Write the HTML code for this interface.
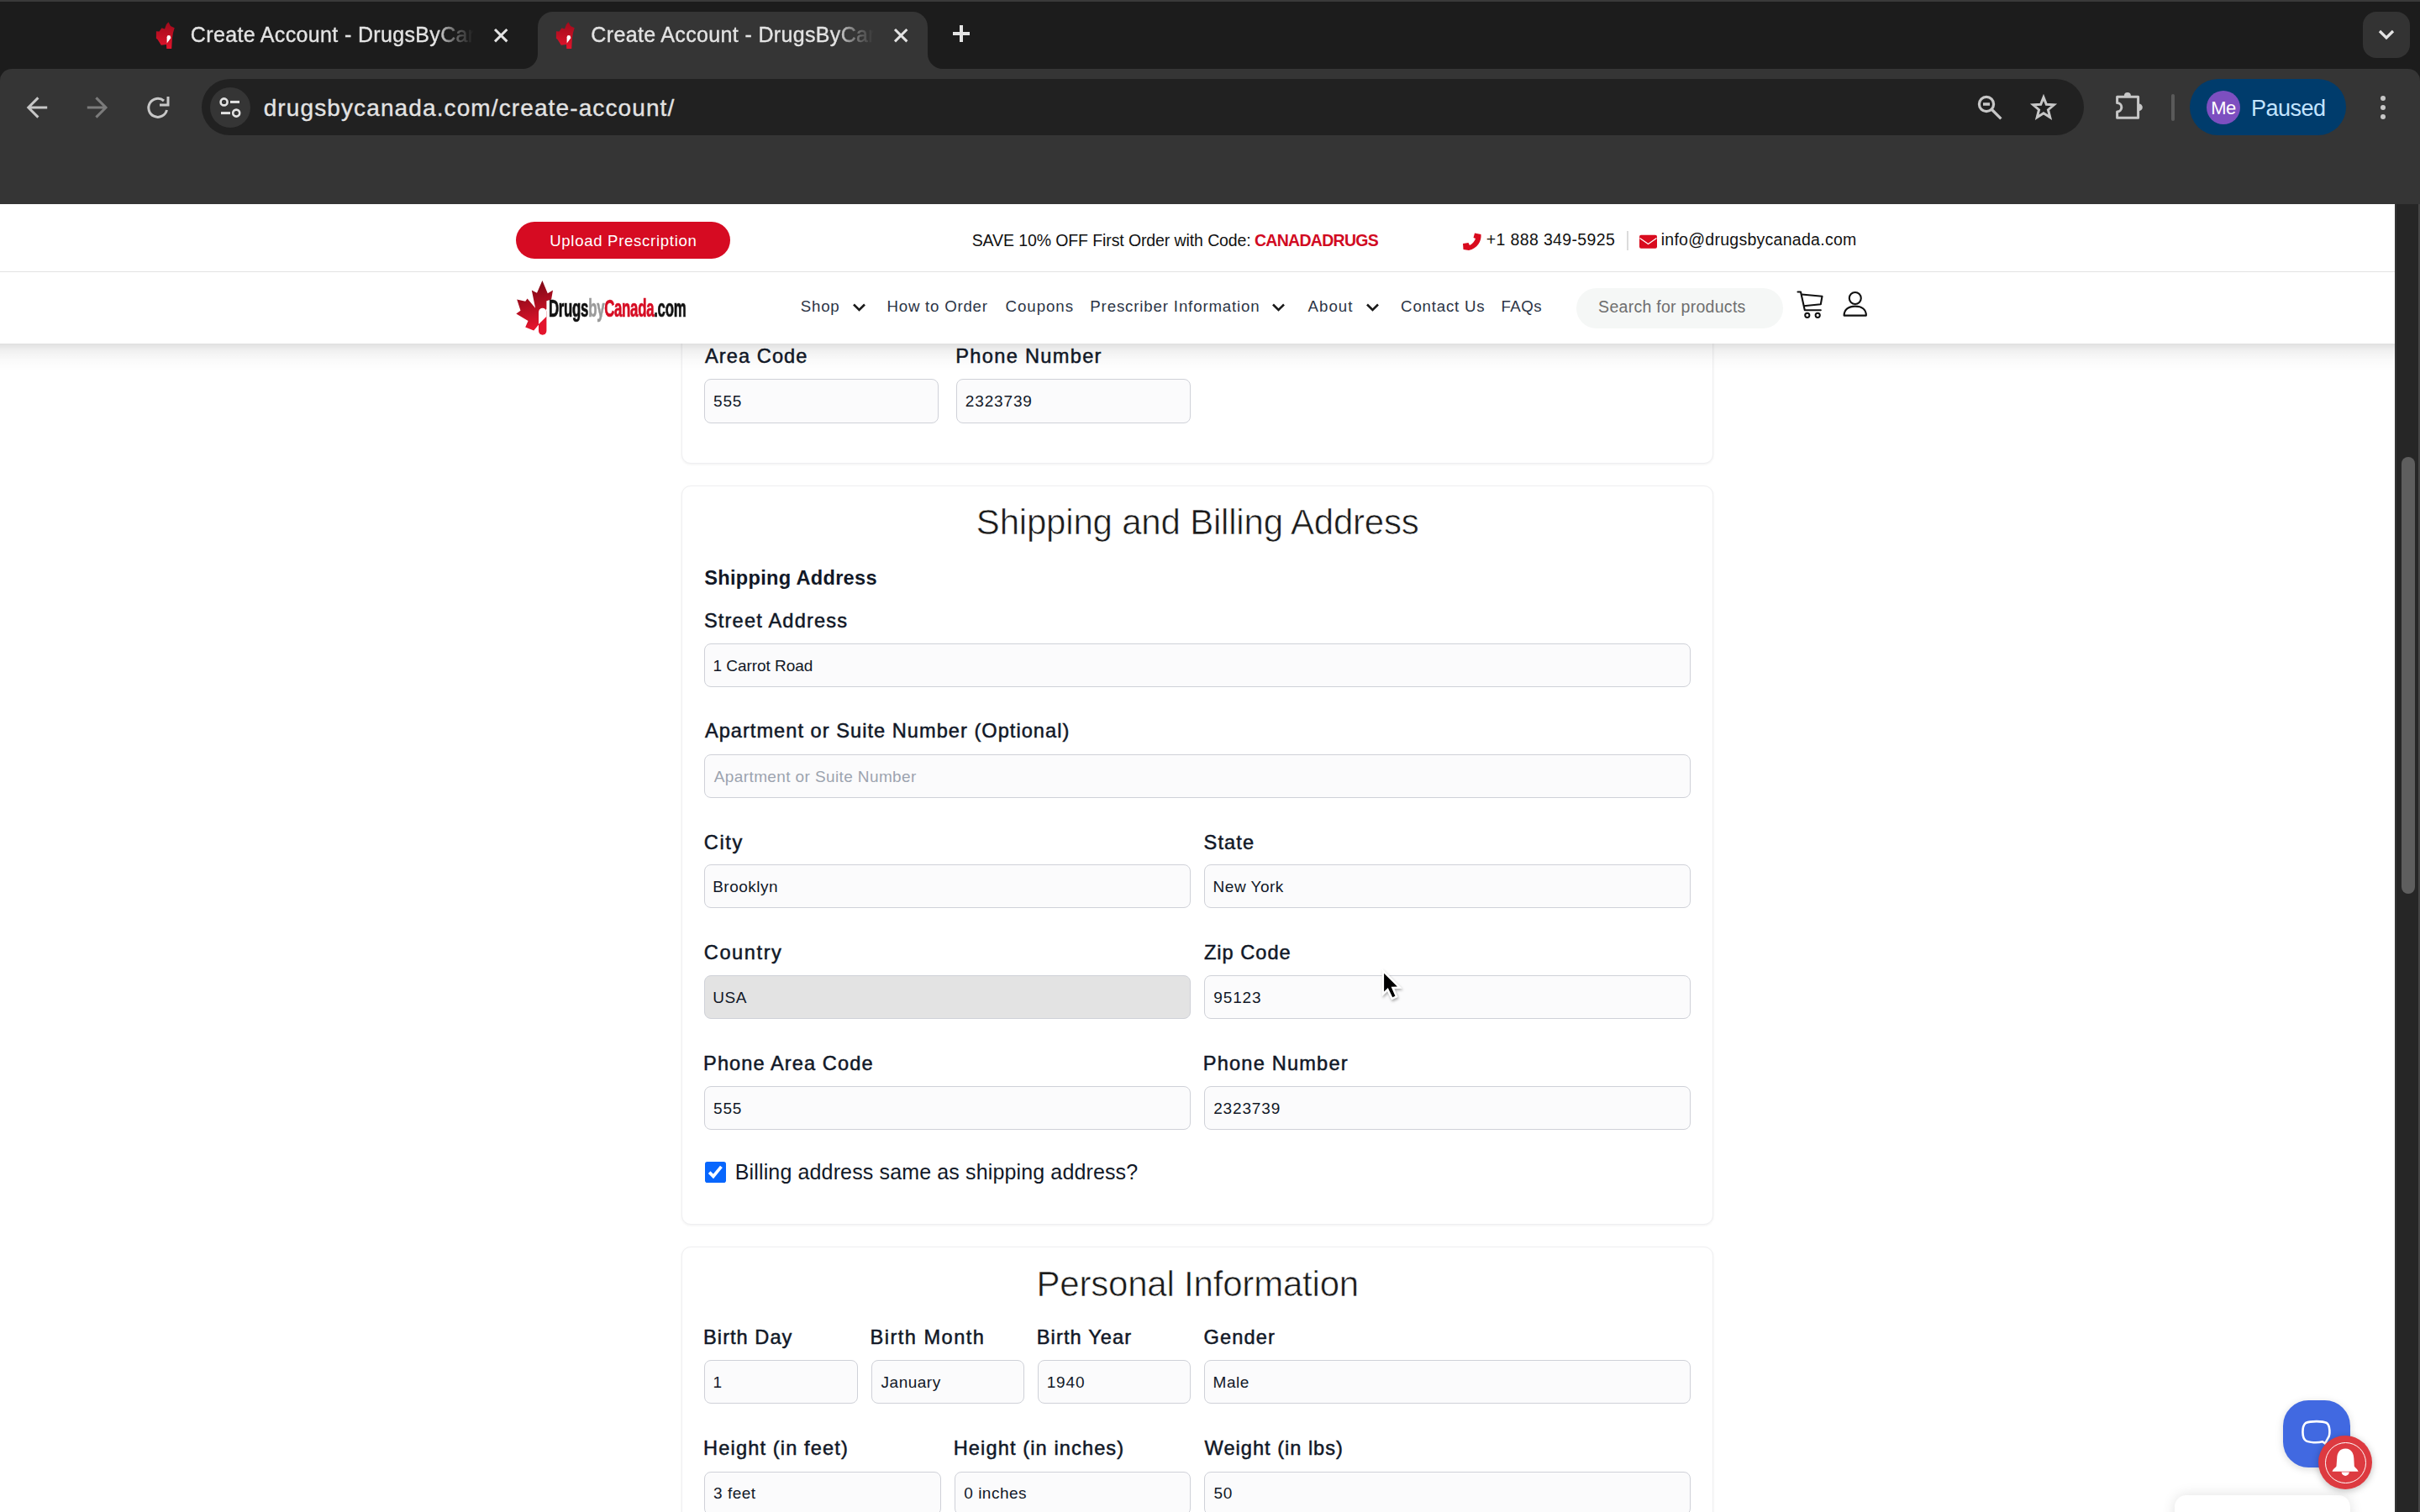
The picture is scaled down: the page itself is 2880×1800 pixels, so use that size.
<!DOCTYPE html><html><head><meta charset="utf-8"><style>
html,body{margin:0;padding:0;}
body{width:2880px;height:1800px;overflow:hidden;position:relative;background:#fff;font-family:"Liberation Sans", sans-serif;}
.t{position:absolute;white-space:nowrap;}
.b{position:absolute;}
</style></head><body>
<div class="b" style="left:0px;top:0px;width:2880px;height:110px;background:#1c1c1c;"></div>
<div class="b" style="left:0px;top:0px;width:2880px;height:2px;background:#3a3a3a;"></div>
<div class="b" style="left:0px;top:82px;width:2880px;height:161px;background:#353535;border-radius:14px 14px 0 0;"></div>
<div class="b" style="left:640px;top:14px;width:464px;height:69px;background:#353535;border-radius:18px 18px 0 0;"></div>
<svg class="b" style="left:622px;top:64px;" width="18" height="18" viewBox="0 0 18 18"><path d="M18 0 L18 18 L0 18 A18 18 0 0 0 18 0Z" fill="#353535"/></svg>
<svg class="b" style="left:1104px;top:64px;" width="18" height="18" viewBox="0 0 18 18"><path d="M0 0 L0 18 L18 18 A18 18 0 0 1 0 0Z" fill="#353535"/></svg>
<svg class="b" style="left:184px;top:25px;" width="26" height="35" viewBox="0 0 26 35"><defs><linearGradient id="fg184" x1="0" y1="0" x2="0" y2="1"><stop offset="0" stop-color="#9e0b1b"/><stop offset="1" stop-color="#e3142c"/></linearGradient></defs><path d="M16.5 1.2 L19 6 L23.7 8.3 L22 14 L21 20 L20.2 33.1 L14.3 33.1 L14 28 L7.8 28.7 L3.5 22 L1.9 20.7 L1.9 12.3 L5.5 12.5 L8.5 8.2 L12 9.5 L14 4 Z" fill="url(#fg184)"/>
    <path d="M14.6 26.5 L19.1 20.5 L19.1 19.3 A2.25 2.25 0 0 0 14.6 19.3Z" fill="#fff"/></svg>
<svg class="b" style="left:660px;top:25px;" width="26" height="35" viewBox="0 0 26 35"><defs><linearGradient id="fg660" x1="0" y1="0" x2="0" y2="1"><stop offset="0" stop-color="#9e0b1b"/><stop offset="1" stop-color="#e3142c"/></linearGradient></defs><path d="M16.5 1.2 L19 6 L23.7 8.3 L22 14 L21 20 L20.2 33.1 L14.3 33.1 L14 28 L7.8 28.7 L3.5 22 L1.9 20.7 L1.9 12.3 L5.5 12.5 L8.5 8.2 L12 9.5 L14 4 Z" fill="url(#fg660)"/>
    <path d="M14.6 26.5 L19.1 20.5 L19.1 19.3 A2.25 2.25 0 0 0 14.6 19.3Z" fill="#fff"/></svg>
<div class="b" style="left:226.8px;top:20px;width:337px;height:44px;overflow:hidden;-webkit-mask-image:linear-gradient(to right,#000 292px,rgba(0,0,0,0.45) 312px,transparent 337px);"><div class="t" style="left:0;top:9.2px;font-size:25px;line-height:25px;color:#e3e3e3;letter-spacing:0.35px;-webkit-text-stroke:0.35px #e3e3e3;">Create Account - DrugsByCanada</div></div>
<div class="b" style="left:703.3px;top:20px;width:337px;height:44px;overflow:hidden;-webkit-mask-image:linear-gradient(to right,#000 292px,rgba(0,0,0,0.45) 312px,transparent 337px);"><div class="t" style="left:0;top:9.2px;font-size:25px;line-height:25px;color:#e3e3e3;letter-spacing:0.35px;-webkit-text-stroke:0.35px #e3e3e3;">Create Account - DrugsByCanada</div></div>
<svg class="b" style="left:586.0px;top:31.799999999999997px;" width="20.4" height="20.4" viewBox="0 0 20.4 20.4"><path d="M3 3 L17.4 17.4 M17.4 3 L3 17.4" stroke="#e3e3e3" stroke-width="3" stroke-linecap="butt"/></svg>
<svg class="b" style="left:1061.8999999999999px;top:31.799999999999997px;" width="20.4" height="20.4" viewBox="0 0 20.4 20.4"><path d="M3 3 L17.4 17.4 M17.4 3 L3 17.4" stroke="#e3e3e3" stroke-width="3" stroke-linecap="butt"/></svg>
<svg class="b" style="left:1132px;top:28px;" width="24" height="24" viewBox="0 0 24 24"><path d="M12 2 V22 M2 12 H22" stroke="#e3e3e3" stroke-width="4"/></svg>
<div class="b" style="left:2812px;top:14px;width:56px;height:55px;background:#333333;border-radius:16px;"></div>
<svg class="b" style="left:2828px;top:34px;" width="24" height="16" viewBox="0 0 24 16"><path d="M4 3 L12 11 L20 3" stroke="#e3e3e3" stroke-width="3.2" fill="none"/></svg>
<svg class="b" style="left:28px;top:112px;" width="32" height="32" viewBox="0 0 32 32"><path d="M6 16 H28.2 M17.4 4.4 L5.8 16 L17.4 27.6" stroke="#c7c7c7" stroke-width="3" fill="none"/></svg>
<svg class="b" style="left:100px;top:112px;" width="32" height="32" viewBox="0 0 32 32"><path d="M3.8 16 H25.6 M14.4 4.4 L26 16 L14.4 27.6" stroke="#7b7b7b" stroke-width="3" fill="none"/></svg>
<svg class="b" style="left:172px;top:112px;" width="32" height="32" viewBox="0 0 32 32"><path d="M26.5 19 A11 11 0 1 1 23 8" stroke="#c7c7c7" stroke-width="3" fill="none"/><path d="M18 13 H28 V3" stroke="#c7c7c7" stroke-width="3" fill="none"/></svg>
<div class="b" style="left:240px;top:94px;width:2240px;height:67px;background:#212121;border-radius:34px;"></div>
<div class="b" style="left:250px;top:104px;width:48px;height:48px;background:#353535;border-radius:50%;"></div>
<svg class="b" style="left:258px;top:112px;" width="32" height="32" viewBox="0 0 32 32"><circle cx="8.6" cy="9.4" r="4" stroke="#e3e3e3" stroke-width="2.6" fill="none"/><path d="M16 9.4 H27" stroke="#e3e3e3" stroke-width="3"/><path d="M5 22.6 H16" stroke="#e3e3e3" stroke-width="3"/><circle cx="23.2" cy="22.6" r="4" stroke="#e3e3e3" stroke-width="2.6" fill="none"/></svg>
<div class="t" style="left:313.7px;top:114.5px;font-size:28px;line-height:28px;color:#e3e3e3;font-weight:400;letter-spacing:1.115px;-webkit-text-stroke:0.35px #e3e3e3;">drugsbycanada.com/create-account/</div>
<svg class="b" style="left:2348px;top:108px;" width="40" height="40" viewBox="0 0 40 40"><circle cx="16" cy="16" r="8.6" stroke="#c7c7c7" stroke-width="3.2" fill="none"/><path d="M12 16 H20" stroke="#c7c7c7" stroke-width="3.5"/><path d="M22.5 22.5 L33.4 33.4" stroke="#c7c7c7" stroke-width="3.2"/></svg>
<svg class="b" style="left:2414px;top:110px;" width="36" height="36" viewBox="0 0 36 36"><g transform="translate(18 18.2) scale(0.88) translate(-18 -18)"><path d="M18 4 L21.8 13.6 L32 14.2 L24.2 20.8 L26.8 31 L18 25.4 L9.2 31 L11.8 20.8 L4 14.2 L14.2 13.6Z" stroke="#c7c7c7" stroke-width="3.4" fill="none" stroke-linejoin="miter"/></g></svg>
<svg class="b" style="left:2512px;top:104px;" width="44" height="44" viewBox="0 0 44 44"><path d="M7.6 11.3 H32.6 V36.3 H7.6 V28.9 A5.2 5.2 0 0 0 7.6 18.5 Z" stroke="#c7c7c7" stroke-width="3" fill="none" stroke-linejoin="round"/><path d="M15.9 10 A4 4 0 0 1 23.9 10Z" fill="#c7c7c7"/><path d="M33.5 19.4 A4.3 4.3 0 0 1 33.5 28Z" fill="#c7c7c7"/></svg>
<div class="b" style="left:2584px;top:112px;width:4px;height:32px;background:#5a5a5a;border-radius:2px;"></div>
<div class="b" style="left:2606px;top:94px;width:186px;height:67px;background:#003c6c;border-radius:34px;"></div>
<div class="b" style="left:2626px;top:108px;width:40px;height:40px;background:#7d4fc0;border-radius:50%;"></div>
<div class="t" style="left:2626.0px;top:118.4px;font-size:22px;line-height:22px;color:#ffffff;font-weight:400;letter-spacing:-0.5px;width:40px;text-align:center;">Me</div>
<div class="t" style="left:2679.0px;top:115.5px;font-size:27px;line-height:27px;color:#c2e4ff;font-weight:400;letter-spacing:-0.5px;">Paused</div>
<svg class="b" style="left:2828px;top:110px;" width="16" height="36" viewBox="0 0 16 36"><circle cx="8" cy="7" r="3" fill="#c7c7c7"/><circle cx="8" cy="18" r="3" fill="#c7c7c7"/><circle cx="8" cy="29" r="3" fill="#c7c7c7"/></svg>
<div class="b" style="left:0px;top:243px;width:2850px;height:1557px;background:#ffffff;"></div>
<div class="b" style="left:811px;top:380px;width:1228px;height:171.5px;background:#fff;border:1.5px solid #efeff1;border-radius:11px;box-shadow:0 1px 3px rgba(0,0,0,0.06);box-sizing:border-box;"></div>
<div class="b" style="left:811px;top:578px;width:1228px;height:879.5px;background:#fff;border:1.5px solid #efeff1;border-radius:11px;box-shadow:0 1px 3px rgba(0,0,0,0.06);box-sizing:border-box;"></div>
<div class="b" style="left:811px;top:1484px;width:1228px;height:416px;background:#fff;border:1.5px solid #efeff1;border-radius:11px;box-shadow:0 1px 3px rgba(0,0,0,0.06);box-sizing:border-box;"></div>
<div class="t" style="left:838.9px;top:412.7px;font-size:23.6px;line-height:23.6px;color:#111827;font-weight:400;letter-spacing:1.094px;-webkit-text-stroke:0.5px #111827;">Area Code</div>
<div class="t" style="left:1137.3px;top:412.7px;font-size:23.6px;line-height:23.6px;color:#111827;font-weight:400;letter-spacing:1.317px;-webkit-text-stroke:0.5px #111827;">Phone Number</div>
<div class="b" style="left:837.8px;top:451.3px;width:279.5px;height:52.30000000000001px;background:#fbfbfc;border:1.6px solid #cfd1d8;border-radius:8px;box-sizing:border-box;"></div>
<div class="t" style="left:849.0px;top:468.1px;font-size:19px;line-height:19px;color:#111827;font-weight:400;letter-spacing:0.85px;">555</div>
<div class="b" style="left:1137.8px;top:451.3px;width:279.5px;height:52.30000000000001px;background:#fbfbfc;border:1.6px solid #cfd1d8;border-radius:8px;box-sizing:border-box;"></div>
<div class="t" style="left:1148.8px;top:468.1px;font-size:19px;line-height:19px;color:#111827;font-weight:400;letter-spacing:0.85px;">2323739</div>
<div class="t" style="left:811.0px;top:600.7px;font-size:42px;line-height:42px;color:#1a1a1a;font-weight:400;letter-spacing:-0.2px;width:1228.5px;text-align:center;-webkit-text-stroke:0.6px #fff;">Shipping and Billing Address</div>
<div class="t" style="left:838.3px;top:677.3px;font-size:23.6px;line-height:23.6px;color:#111827;font-weight:700;letter-spacing:0.283px;">Shipping Address</div>
<div class="t" style="left:837.9px;top:727.6px;font-size:23.6px;line-height:23.6px;color:#111827;font-weight:400;letter-spacing:1.19px;-webkit-text-stroke:0.5px #111827;">Street Address</div>
<div class="b" style="left:837.8px;top:765.9px;width:1174.0px;height:52.10000000000002px;background:#fbfbfc;border:1.6px solid #cfd1d8;border-radius:8px;box-sizing:border-box;"></div>
<div class="t" style="left:848.4px;top:782.7px;font-size:19px;line-height:19px;color:#111827;font-weight:400;letter-spacing:-0.026px;">1 Carrot Road</div>
<div class="t" style="left:838.9px;top:859.4px;font-size:23.6px;line-height:23.6px;color:#111827;font-weight:400;letter-spacing:1.03px;-webkit-text-stroke:0.5px #111827;">Apartment or Suite Number (Optional)</div>
<div class="b" style="left:837.8px;top:897.7px;width:1174.0px;height:52.09999999999991px;background:#fbfbfc;border:1.6px solid #cfd1d8;border-radius:8px;box-sizing:border-box;"></div>
<div class="t" style="left:849.8px;top:914.5px;font-size:19px;line-height:19px;color:#9ca3af;font-weight:400;letter-spacing:0.386px;">Apartment or Suite Number</div>
<div class="t" style="left:837.8px;top:991.6px;font-size:23.6px;line-height:23.6px;color:#111827;font-weight:400;letter-spacing:1.629px;-webkit-text-stroke:0.5px #111827;">City</div>
<div class="t" style="left:1432.6px;top:991.6px;font-size:23.6px;line-height:23.6px;color:#111827;font-weight:400;letter-spacing:1.115px;-webkit-text-stroke:0.5px #111827;">State</div>
<div class="b" style="left:837.8px;top:1029.4px;width:579.5px;height:52.09999999999991px;background:#fbfbfc;border:1.6px solid #cfd1d8;border-radius:8px;box-sizing:border-box;"></div>
<div class="t" style="left:848.2px;top:1046.2px;font-size:19px;line-height:19px;color:#111827;font-weight:400;letter-spacing:0.5px;">Brooklyn</div>
<div class="b" style="left:1433.2px;top:1029.4px;width:578.5999999999999px;height:52.09999999999991px;background:#fbfbfc;border:1.6px solid #cfd1d8;border-radius:8px;box-sizing:border-box;"></div>
<div class="t" style="left:1443.6px;top:1046.2px;font-size:19px;line-height:19px;color:#111827;font-weight:400;letter-spacing:0.5px;">New York</div>
<div class="t" style="left:837.8px;top:1123.4px;font-size:23.6px;line-height:23.6px;color:#111827;font-weight:400;letter-spacing:1.58px;-webkit-text-stroke:0.5px #111827;">Country</div>
<div class="t" style="left:1432.9px;top:1123.4px;font-size:23.6px;line-height:23.6px;color:#111827;font-weight:400;letter-spacing:1.016px;-webkit-text-stroke:0.5px #111827;">Zip Code</div>
<div class="b" style="left:837.8px;top:1161.2px;width:579.5px;height:52.09999999999991px;background:#fbfbfc;border:1.6px solid #cfd1d8;border-radius:8px;box-sizing:border-box;background:#e3e3e3;"></div>
<div class="t" style="left:848.3px;top:1178.0px;font-size:19px;line-height:19px;color:#111827;font-weight:400;letter-spacing:0.5px;">USA</div>
<div class="b" style="left:1433.2px;top:1161.2px;width:578.5999999999999px;height:52.09999999999991px;background:#fbfbfc;border:1.6px solid #cfd1d8;border-radius:8px;box-sizing:border-box;"></div>
<div class="t" style="left:1444.3px;top:1178.0px;font-size:19px;line-height:19px;color:#111827;font-weight:400;letter-spacing:0.85px;">95123</div>
<div class="t" style="left:837.1px;top:1255.4px;font-size:23.6px;line-height:23.6px;color:#111827;font-weight:400;letter-spacing:1.081px;-webkit-text-stroke:0.5px #111827;">Phone Area Code</div>
<div class="t" style="left:1431.8px;top:1255.4px;font-size:23.6px;line-height:23.6px;color:#111827;font-weight:400;letter-spacing:1.19px;-webkit-text-stroke:0.5px #111827;">Phone Number</div>
<div class="b" style="left:837.8px;top:1293.2px;width:579.5px;height:52.09999999999991px;background:#fbfbfc;border:1.6px solid #cfd1d8;border-radius:8px;box-sizing:border-box;"></div>
<div class="t" style="left:849.0px;top:1310.0px;font-size:19px;line-height:19px;color:#111827;font-weight:400;letter-spacing:0.85px;">555</div>
<div class="b" style="left:1433.2px;top:1293.2px;width:578.5999999999999px;height:52.09999999999991px;background:#fbfbfc;border:1.6px solid #cfd1d8;border-radius:8px;box-sizing:border-box;"></div>
<div class="t" style="left:1444.2px;top:1310.0px;font-size:19px;line-height:19px;color:#111827;font-weight:400;letter-spacing:0.85px;">2323739</div>
<div class="b" style="left:839px;top:1383px;width:25px;height:25px;background:#0866fd;border-radius:2.8px;"></div>
<svg class="b" style="left:839px;top:1383px;" width="25" height="25" viewBox="0 0 25 25"><path d="M5.2 12.6 L9.9 17.4 L19.4 5.9" stroke="#fff" stroke-width="3.7" fill="none" stroke-linecap="butt" stroke-linejoin="miter"/></svg>
<div class="t" style="left:874.8px;top:1382.9px;font-size:25px;line-height:25px;color:#111827;font-weight:400;letter-spacing:0.137px;">Billing address same as shipping address?</div>
<div class="t" style="left:811.0px;top:1507.6px;font-size:42px;line-height:42px;color:#1a1a1a;font-weight:400;letter-spacing:-0.2px;width:1228.5px;text-align:center;-webkit-text-stroke:0.6px #fff;">Personal Information</div>
<div class="t" style="left:837.1px;top:1580.5px;font-size:23.6px;line-height:23.6px;color:#111827;font-weight:400;letter-spacing:1.031px;-webkit-text-stroke:0.5px #111827;">Birth Day</div>
<div class="t" style="left:1035.5px;top:1580.5px;font-size:23.6px;line-height:23.6px;color:#111827;font-weight:400;letter-spacing:1.477px;-webkit-text-stroke:0.5px #111827;">Birth Month</div>
<div class="t" style="left:1233.7px;top:1580.5px;font-size:23.6px;line-height:23.6px;color:#111827;font-weight:400;letter-spacing:1.133px;-webkit-text-stroke:0.5px #111827;">Birth Year</div>
<div class="t" style="left:1432.5px;top:1580.5px;font-size:23.6px;line-height:23.6px;color:#111827;font-weight:400;letter-spacing:1.126px;-webkit-text-stroke:0.5px #111827;">Gender</div>
<div class="b" style="left:837.8px;top:1619.4px;width:183.30000000000007px;height:52.09999999999991px;background:#fbfbfc;border:1.6px solid #cfd1d8;border-radius:8px;box-sizing:border-box;"></div>
<div class="t" style="left:848.4px;top:1636.2px;font-size:19px;line-height:19px;color:#111827;font-weight:400;letter-spacing:0.85px;">1</div>
<div class="b" style="left:1036.9px;top:1619.4px;width:182.39999999999986px;height:52.09999999999991px;background:#fbfbfc;border:1.6px solid #cfd1d8;border-radius:8px;box-sizing:border-box;"></div>
<div class="t" style="left:1048.6px;top:1636.2px;font-size:19px;line-height:19px;color:#111827;font-weight:400;letter-spacing:0.5px;">January</div>
<div class="b" style="left:1235.1px;top:1619.4px;width:182.20000000000005px;height:52.09999999999991px;background:#fbfbfc;border:1.6px solid #cfd1d8;border-radius:8px;box-sizing:border-box;"></div>
<div class="t" style="left:1245.7px;top:1636.2px;font-size:19px;line-height:19px;color:#111827;font-weight:400;letter-spacing:0.85px;">1940</div>
<div class="b" style="left:1433.2px;top:1619.4px;width:578.5999999999999px;height:52.09999999999991px;background:#fbfbfc;border:1.6px solid #cfd1d8;border-radius:8px;box-sizing:border-box;"></div>
<div class="t" style="left:1443.6px;top:1636.2px;font-size:19px;line-height:19px;color:#111827;font-weight:400;letter-spacing:0.5px;">Male</div>
<div class="t" style="left:837.1px;top:1713.1px;font-size:23.6px;line-height:23.6px;color:#111827;font-weight:400;letter-spacing:1.134px;-webkit-text-stroke:0.5px #111827;">Height (in feet)</div>
<div class="t" style="left:1134.7px;top:1713.1px;font-size:23.6px;line-height:23.6px;color:#111827;font-weight:400;letter-spacing:1.109px;-webkit-text-stroke:0.5px #111827;">Height (in inches)</div>
<div class="t" style="left:1433.6px;top:1713.1px;font-size:23.6px;line-height:23.6px;color:#111827;font-weight:400;letter-spacing:0.996px;-webkit-text-stroke:0.5px #111827;">Weight (in lbs)</div>
<div class="b" style="left:837.8px;top:1751.5px;width:282.29999999999995px;height:52.09999999999991px;background:#fbfbfc;border:1.6px solid #cfd1d8;border-radius:8px;box-sizing:border-box;"></div>
<div class="t" style="left:849.1px;top:1768.3px;font-size:19px;line-height:19px;color:#111827;font-weight:400;letter-spacing:0.5px;">3 feet</div>
<div class="b" style="left:1136.1px;top:1751.5px;width:281.20000000000005px;height:52.09999999999991px;background:#fbfbfc;border:1.6px solid #cfd1d8;border-radius:8px;box-sizing:border-box;"></div>
<div class="t" style="left:1147.3px;top:1768.3px;font-size:19px;line-height:19px;color:#111827;font-weight:400;letter-spacing:0.5px;">0 inches</div>
<div class="b" style="left:1433.2px;top:1751.5px;width:578.5999999999999px;height:52.09999999999991px;background:#fbfbfc;border:1.6px solid #cfd1d8;border-radius:8px;box-sizing:border-box;"></div>
<div class="t" style="left:1444.4px;top:1768.3px;font-size:19px;line-height:19px;color:#111827;font-weight:400;letter-spacing:0.85px;">50</div>
<div class="b" style="left:0px;top:243px;width:2850px;height:166px;background:#fff;"></div>
<div class="b" style="left:0px;top:409px;width:2850px;height:33px;background:linear-gradient(rgba(0,0,0,0.12),rgba(0,0,0,0.06) 25%,rgba(0,0,0,0.02) 60%,rgba(0,0,0,0));"></div>
<div class="b" style="left:0px;top:322.5px;width:2850px;height:1.5px;background:#e2e2e2;"></div>
<div class="b" style="left:614px;top:264px;width:255px;height:44px;background:#d60b22;border-radius:22px;"></div>
<div class="t" style="left:654.2px;top:277.5px;font-size:18.6px;line-height:18.6px;color:#ffffff;font-weight:400;letter-spacing:0.69px;">Upload Prescription</div>
<div class="t" style="left:1156.7px;top:276.5px;font-size:19.5px;line-height:19.5px;color:#111111;font-weight:400;letter-spacing:-0.103px;">SAVE 10% OFF First Order with Code:</div>
<div class="t" style="left:1492.9px;top:276.5px;font-size:19.5px;line-height:19.5px;color:#d10a22;font-weight:700;letter-spacing:-0.707px;">CANADADRUGS</div>
<svg class="b" style="left:1739px;top:275px;" width="26" height="25" viewBox="0 0 26 25"><path d="M16 2.5 L23.5 4 C24.5 12 19 21 9 23 L2.5 22 L2 15 L8.5 14 L10 17 C13.5 15.5 16 12 17 9 L14.5 8Z" fill="#d90b1e"/></svg>
<div class="t" style="left:1768.8px;top:276.1px;font-size:19.5px;line-height:19.5px;color:#111111;font-weight:400;letter-spacing:0.357px;">+1 888 349-5925</div>
<div class="b" style="left:1936px;top:275px;width:2px;height:23px;background:#dcdcdc;"></div>
<svg class="b" style="left:1950px;top:279px;" width="23" height="18" viewBox="0 0 23 18"><rect x="1" y="0.7" width="21" height="16" rx="2" fill="#d90b1e"/><path d="M1.5 4.5 L11.5 11.5 L21.5 4.5" stroke="#fff" stroke-width="1.3" fill="none"/></svg>
<div class="t" style="left:1976.7px;top:276.1px;font-size:19.5px;line-height:19.5px;color:#111111;font-weight:400;letter-spacing:0.274px;">info@drugsbycanada.com</div>
<div class="t" style="left:952.8px;top:356.3px;font-size:18.7px;line-height:18.7px;color:#2b3445;font-weight:400;letter-spacing:0.775px;">Shop</div>
<svg class="b" style="left:1014.3px;top:360.2px;" width="18" height="13" viewBox="0 0 18 13"><path d="M2 2.5 L8.5 9 L15 2.5" stroke="#1a1a1a" stroke-width="2.6" fill="none"/></svg>
<div class="t" style="left:1055.5px;top:356.3px;font-size:18.7px;line-height:18.7px;color:#2b3445;font-weight:400;letter-spacing:0.759px;">How to Order</div>
<div class="t" style="left:1196.6px;top:356.3px;font-size:18.7px;line-height:18.7px;color:#2b3445;font-weight:400;letter-spacing:0.94px;">Coupons</div>
<div class="t" style="left:1297.3px;top:356.3px;font-size:18.7px;line-height:18.7px;color:#2b3445;font-weight:400;letter-spacing:0.838px;">Prescriber Information</div>
<svg class="b" style="left:1512.8px;top:360.2px;" width="18" height="13" viewBox="0 0 18 13"><path d="M2 2.5 L8.5 9 L15 2.5" stroke="#1a1a1a" stroke-width="2.6" fill="none"/></svg>
<div class="t" style="left:1556.6px;top:356.3px;font-size:18.7px;line-height:18.7px;color:#2b3445;font-weight:400;letter-spacing:1.008px;">About</div>
<svg class="b" style="left:1625px;top:360.2px;" width="18" height="13" viewBox="0 0 18 13"><path d="M2 2.5 L8.5 9 L15 2.5" stroke="#1a1a1a" stroke-width="2.6" fill="none"/></svg>
<div class="t" style="left:1667.1px;top:356.3px;font-size:18.7px;line-height:18.7px;color:#2b3445;font-weight:400;letter-spacing:0.786px;">Contact Us</div>
<div class="t" style="left:1786.5px;top:356.3px;font-size:18.7px;line-height:18.7px;color:#2b3445;font-weight:400;letter-spacing:0.482px;">FAQs</div>
<div class="b" style="left:1876px;top:343px;width:246px;height:48px;background:#f5f7f6;border-radius:24px;"></div>
<div class="t" style="left:1902.1px;top:356.2px;font-size:19.5px;line-height:19.5px;color:#6e6e6e;font-weight:400;letter-spacing:0.282px;">Search for products</div>
<svg class="b" style="left:2136px;top:343px;" width="36" height="38" viewBox="0 0 36 38"><path d="M3.5 4.5 H7 L11.8 26.3 H30.8" stroke="#111" stroke-width="2.1" fill="none" stroke-linejoin="round" stroke-linecap="round"/><path d="M8.2 7.5 L32.5 9.8 L30.8 19.3 L10.6 21.3" stroke="#111" stroke-width="2.1" fill="none" stroke-linejoin="round"/><circle cx="14.8" cy="32.3" r="2.6" stroke="#111" stroke-width="2" fill="none"/><circle cx="27.2" cy="32.3" r="2.6" stroke="#111" stroke-width="2" fill="none"/></svg>
<svg class="b" style="left:2191px;top:345px;" width="34" height="34" viewBox="0 0 34 34"><circle cx="16.8" cy="10" r="7" stroke="#111" stroke-width="2.1" fill="none"/><path d="M3.6 30.6 C3.6 23.2 9 19.6 16.8 19.6 C24.5 19.6 29.9 23.2 29.9 30.6 Z" stroke="#111" stroke-width="2.1" fill="none" stroke-linejoin="round"/></svg>
<svg class="b" style="left:612px;top:332px;" width="52" height="70" viewBox="0 0 52 70"><defs><linearGradient id="lg" x1="0" y1="0" x2="0.2" y2="1"><stop offset="0" stop-color="#6e0612"/><stop offset="1" stop-color="#e3142c"/></linearGradient></defs>
<path d="M33.4 2.0 L39.8 17.2 L46.0 13.4 L44.1 24.4 L38.4 26.3 L38.4 35.8 L28.9 54.8 L23.2 61.4 L13.2 57.6 L16.5 50.0 L2.3 41.5 L7.5 37.7 L3.2 24.4 L13.2 26.7 L15.6 23.4 L25.1 34.8 L20.8 13.4 L27.0 16.8Z" fill="url(#lg)"/>
<rect x="29" y="34.8" width="9.4" height="31.9" rx="4.7" fill="#e3142c"/>
<path d="M29 54 L38.4 44.8 L38.4 39.5 A4.7 4.7 0 0 0 29 39.5Z" fill="#fff"/></svg>
<div class="t" style="left:652.8px;top:352.5px;font-size:29px;line-height:29px;font-weight:700;letter-spacing:-0.5px;-webkit-text-stroke-width:0.7px;transform:scaleX(0.58);transform-origin:0 0;"><span style="color:#111">Drugs</span><span style="color:#9a9a9a">by</span><span style="color:#d60b22">Canada</span><span style="color:#111">.com</span></div>
<div class="b" style="left:2850px;top:243px;width:30px;height:1557px;background:#262626;"></div>
<div class="b" style="left:2850px;top:243px;width:1.5px;height:1557px;background:#343434;"></div>
<div class="b" style="left:2878px;top:243px;width:2px;height:1557px;background:#454545;"></div>
<div class="b" style="left:2857.5px;top:543.6px;width:16.5px;height:520.6999999999999px;background:#5e5e5e;border-radius:9px;"></div>
<div class="b" style="left:2588px;top:1780px;width:209px;height:50px;background:#fff;border-radius:14px;box-shadow:0 0 16px rgba(0,0,0,0.12);"></div>
<div class="b" style="left:2717px;top:1667px;width:80px;height:80px;background:#4169e1;border-radius:38%;box-shadow:0 2px 10px rgba(0,0,0,0.15);"></div>
<svg class="b" style="left:2732px;top:1684px;" width="50" height="46" viewBox="0 0 50 46"><path d="M12 10 C18 7.5 32 7.5 37 10 C41 13 41.5 24 38.5 28 L35 34.5 L32 32.2 C26 34 16 33.5 12 31 C7.5 28 7 14 12 10Z" stroke="#fff" stroke-width="2.6" fill="none" stroke-linejoin="round"/></svg>
<div class="b" style="left:2759px;top:1709px;width:64px;height:64px;background:#dd3a40;border-radius:50%;box-shadow:0 2px 8px rgba(0,0,0,0.25);"></div>
<div class="b" style="left:2766.5px;top:1716.5px;width:49.0px;height:49.0px;border:1.5px solid #fff;border-radius:50%;box-sizing:border-box;"></div>
<svg class="b" style="left:2770px;top:1718px;" width="42" height="44" viewBox="0 0 42 44"><path d="M21.4 6.6 C14 6.6 11.5 12 11.2 18 L10.5 27.5 C9 29.5 6.5 31 5.5 33.7 L36.6 33.7 C35.5 31 33 29.5 31.8 27.5 L31.3 18 C31 12 28.5 6.6 21.4 6.6Z" fill="#fff"/><path d="M16.5 34.6 C17 37.5 19 39 21.2 39 C23.4 39 25.4 37.5 25.9 34.6Z" fill="#fff"/></svg>
<svg class="b" style="left:1638px;top:1148px;filter:drop-shadow(1px 2px 1.5px rgba(0,0,0,0.3));" width="34" height="46" viewBox="0 0 34 46"><path d="M9.1 10.7 L9.1 32.5 L13.8 27.9 L19.2 39.2 L22.4 37.8 L17.6 26.7 L24.9 26.5 Z" fill="#000" stroke="#fff" stroke-width="5" stroke-linejoin="miter" paint-order="stroke"/></svg>
<!--PAGE-->
</body></html>
